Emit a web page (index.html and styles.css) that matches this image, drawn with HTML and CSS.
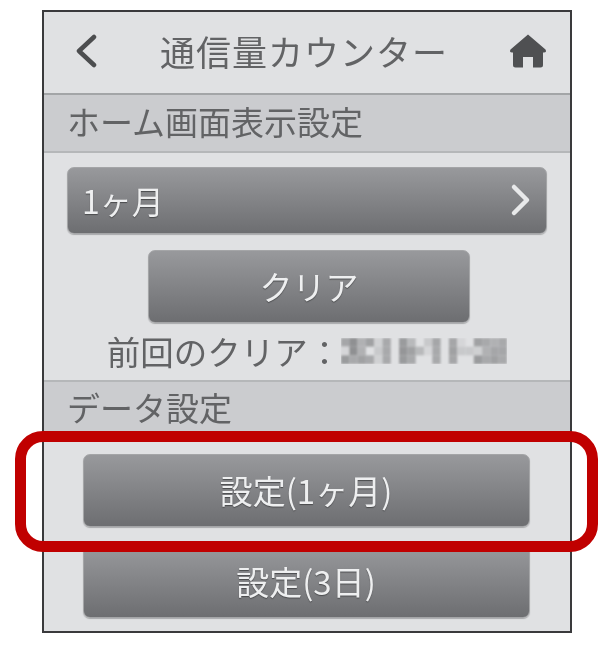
FILE: index.html
```html
<!DOCTYPE html>
<html lang="ja">
<head>
<meta charset="utf-8">
<title>通信量カウンター</title>
<link rel="stylesheet" href="styles.css">
</head>
<body>
<div class="screen">
  <header class="topbar">
    <svg class="back" viewBox="0 0 26 34" width="26" height="34"><path d="M21 3 L6 17 L21 31" fill="none" stroke="#4c4d4f" stroke-width="4.5" stroke-linecap="round" stroke-linejoin="round"/></svg>
    <h1 class="title">通信量カウンター</h1>
    <svg class="home" viewBox="0 0 38 34" width="38" height="34"><path d="M19 0.5 L36.5 15.5 Q38 18.5 35 18.5 L34 18.5 L34 31 Q34 33.5 31.5 33.5 L24 33.5 L24 23 L14 23 L14 33.5 L6.5 33.5 Q4 33.5 4 31 L4 18.5 L3 18.5 Q0 18.5 1.5 15.5 Z" fill="#4f5052"/></svg>
  </header>
  <div class="section">ホーム画面表示設定</div>
  <div class="group first">
    <button class="btn select"><span>1ヶ月</span><svg viewBox="0 0 22 34" width="22" height="34"><path d="M4 4 L17 17 L4 30" fill="none" stroke="#e8e9ea" stroke-width="4.5" stroke-linecap="round" stroke-linejoin="round"/></svg></button>
    <button class="btn clear">クリア</button>
    <p class="last">前回のクリア：<svg class="mosaic" viewBox="0 0 20 3" width="166" height="26" preserveAspectRatio="none"><defs><filter id="soft" x="-5%" y="-20%" width="110%" height="140%"><feGaussianBlur stdDeviation="0.12"/></filter></defs><g filter="url(#soft)"><rect x="0" y="0" width="1" height="1" fill="#a5a6a8"/><rect x="1" y="0" width="1" height="1" fill="#8f9092"/><rect x="2" y="0" width="1" height="1" fill="#b0b1b3"/><rect x="3" y="0" width="1" height="1" fill="#a0a1a3"/><rect x="4" y="0" width="1" height="1" fill="#d0d1d3"/><rect x="5" y="0" width="1" height="1" fill="#a8a9ab"/><rect x="7" y="0" width="1" height="1" fill="#9a9b9d"/><rect x="8" y="0" width="1" height="1" fill="#b8b9bb"/><rect x="10" y="0" width="1" height="1" fill="#c8c9cb"/><rect x="11" y="0" width="1" height="1" fill="#a5a6a8"/><rect x="13" y="0" width="1" height="1" fill="#a5a6a8"/><rect x="14" y="0" width="1" height="1" fill="#d5d6d8"/><rect x="16" y="0" width="1" height="1" fill="#a0a1a3"/><rect x="17" y="0" width="1" height="1" fill="#a8a9ab"/><rect x="18" y="0" width="1" height="1" fill="#b0b1b3"/><rect x="19" y="0" width="1" height="1" fill="#a8a9ab"/><rect x="0" y="1" width="1" height="1" fill="#d5d6d8"/><rect x="1" y="1" width="1" height="1" fill="#8f9092"/><rect x="2" y="1" width="1" height="1" fill="#b0b1b3"/><rect x="4" y="1" width="1" height="1" fill="#c8c9cb"/><rect x="5" y="1" width="1" height="1" fill="#a8a9ab"/><rect x="7" y="1" width="1" height="1" fill="#959698"/><rect x="8" y="1" width="1" height="1" fill="#a0a1a3"/><rect x="9" y="1" width="1" height="1" fill="#b8b9bb"/><rect x="10" y="1" width="1" height="1" fill="#d5d6d8"/><rect x="11" y="1" width="1" height="1" fill="#a8a9ab"/><rect x="13" y="1" width="1" height="1" fill="#a0a1a3"/><rect x="14" y="1" width="1" height="1" fill="#c8c9cb"/><rect x="15" y="1" width="1" height="1" fill="#c8c9cb"/><rect x="16" y="1" width="1" height="1" fill="#cfd0d2"/><rect x="17" y="1" width="1" height="1" fill="#b0b1b3"/><rect x="18" y="1" width="1" height="1" fill="#a5a6a8"/><rect x="19" y="1" width="1" height="1" fill="#a5a6a8"/><rect x="0" y="2" width="1" height="1" fill="#9a9b9d"/><rect x="1" y="2" width="1" height="1" fill="#a8a9ab"/><rect x="2" y="2" width="1" height="1" fill="#a0a1a3"/><rect x="3" y="2" width="1" height="1" fill="#a8a9ab"/><rect x="4" y="2" width="1" height="1" fill="#d0d1d3"/><rect x="5" y="2" width="1" height="1" fill="#a8a9ab"/><rect x="7" y="2" width="1" height="1" fill="#9a9b9d"/><rect x="8" y="2" width="1" height="1" fill="#a8a9ab"/><rect x="11" y="2" width="1" height="1" fill="#a8a9ab"/><rect x="13" y="2" width="1" height="1" fill="#a5a6a8"/><rect x="16" y="2" width="1" height="1" fill="#9a9b9d"/><rect x="17" y="2" width="1" height="1" fill="#a8a9ab"/><rect x="18" y="2" width="1" height="1" fill="#a0a1a3"/><rect x="19" y="2" width="1" height="1" fill="#a8a9ab"/></g></svg></p>
  </div>
  <div class="section">データ設定</div>
  <div class="group second">
    <button class="btn wide">設定(1ヶ月)</button>
    <button class="btn wide">設定(3日)</button>
  </div>
</div>
<div class="highlight"></div>
</body>
</html>
```
FILE: styles.css
```css
* { box-sizing: border-box; }
html, body { margin: 0; padding: 0; }
body {
  width: 611px;
  height: 645px;
  background: #fff;
  padding: 10px 0 0 42px;
  font-family: "Noto Sans CJK JP", "Noto Sans", sans-serif;
  position: relative;
  overflow: hidden;
}
.screen {
  width: 530px;
  height: 623px;
  border: 2px solid #3a3a3c;
  background: #e0e1e3;
  color: #626365;
  overflow: hidden;
  filter: blur(0.5px);
}
.topbar {
  height: 83px;
  display: flex;
  align-items: center;
  padding: 0 23px 4px 29px;
  border-bottom: 2px solid #a3a5a7;
}
.back { flex: none; }
.home { flex: none; }
.title {
  flex: 1;
  margin: 0;
  font-size: 35px;
  font-weight: 400;
  line-height: 40px;
  text-align: center;
  letter-spacing: 1px;
  color: #626365;
}
.section {
  height: 58px;
  padding-left: 23px;
  background: #cbcccf;
  border-bottom: 2px solid #b5b7b9;
  font-size: 33px;
  line-height: 52px;
}
.section + .group + .section { border-top: 2px solid #b5b7b9; line-height: 50px; }
.group { display: flex; flex-direction: column; align-items: center; }
.first { height: 227px; padding-top: 14px; }
.second { padding-top: 16px; gap: 18px; }
.btn {
  display: flex;
  align-items: center;
  justify-content: center;
  border: 1px solid #a4a5a7;
  border-radius: 7px;
  background: linear-gradient(#98999c, #6d6e71);
  box-shadow: 0 1px 1px #a9aaac;
  color: #eeeff0;
  font: inherit;
  font-size: 33px;
  text-shadow: 0 1px 1px #4a4b4d;
  padding: 0 0 2px;
}
.select { width: 480px; height: 67px; justify-content: space-between; padding: 0 14px 2px 14px; font-size: 32px; }
.clear { width: 322px; height: 73px; margin: 16px 0 0 4px; }
.last {
  margin: 6px 0 0;
  display: flex;
  align-items: center;
  font-size: 33.5px;
  line-height: 44px;
}
.mosaic { flex: none; }
.wide { width: 447px; height: 73px; margin-right: 2px; }
.highlight {
  position: absolute;
  left: 15px;
  top: 431px;
  width: 583px;
  height: 121px;
  border: 11px solid #c00000;
  border-radius: 28px;
}
```
